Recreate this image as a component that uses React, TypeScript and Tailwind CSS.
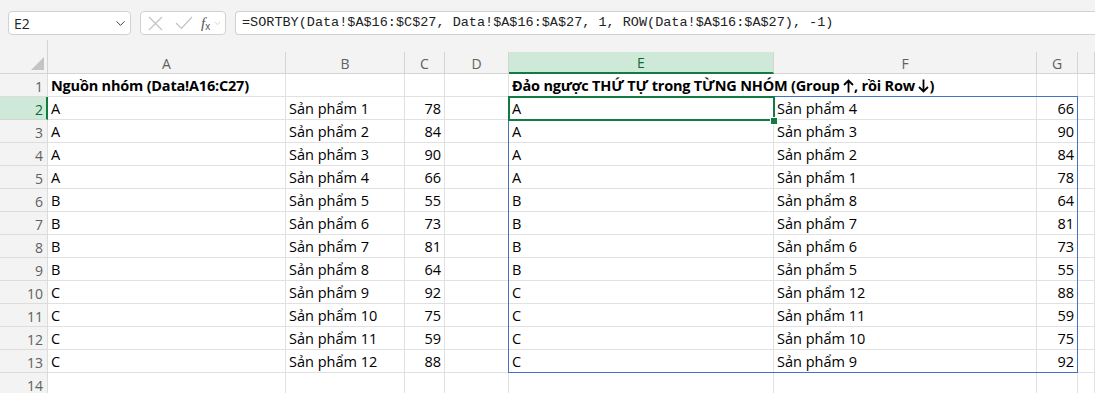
import { ChevronDown } from 'lucide-react';

const left = [
  ['A', 'Sản phẩm 1', 78],
  ['A', 'Sản phẩm 2', 84],
  ['A', 'Sản phẩm 3', 90],
  ['A', 'Sản phẩm 4', 66],
  ['B', 'Sản phẩm 5', 55],
  ['B', 'Sản phẩm 6', 73],
  ['B', 'Sản phẩm 7', 81],
  ['B', 'Sản phẩm 8', 64],
  ['C', 'Sản phẩm 9', 92],
  ['C', 'Sản phẩm 10', 75],
  ['C', 'Sản phẩm 11', 59],
  ['C', 'Sản phẩm 12', 88],
];

const right = [
  ['A', 'Sản phẩm 4', 66],
  ['A', 'Sản phẩm 3', 90],
  ['A', 'Sản phẩm 2', 84],
  ['A', 'Sản phẩm 1', 78],
  ['B', 'Sản phẩm 8', 64],
  ['B', 'Sản phẩm 7', 81],
  ['B', 'Sản phẩm 6', 73],
  ['B', 'Sản phẩm 5', 55],
  ['C', 'Sản phẩm 12', 88],
  ['C', 'Sản phẩm 11', 59],
  ['C', 'Sản phẩm 10', 75],
  ['C', 'Sản phẩm 9', 92],
];

const colLetters = ['A', 'B', 'C', 'D', 'E', 'F', 'G', ''];

function Cell({ children, align = 'left', bold = false, noRight = false }: { children?: React.ReactNode; align?: 'left' | 'right'; bold?: boolean; noRight?: boolean }) {
  return (
    <div
      className={`h-[23px] border-b border-[#e1e1e1] flex items-center pt-[2px] px-[3px] whitespace-nowrap overflow-visible ${noRight ? '' : 'border-r'} ${align === 'right' ? 'justify-end' : ''} ${bold ? 'font-bold tracking-[-0.2px]' : ''}`}
    >
      {children}
    </div>
  );
}

function Arrow({ up }: { up?: boolean }) {
  return (
    <svg width="11" height="14" viewBox="0 0 11 14" className="inline-block -mt-[2px]">
      {up ? (
        <path d="M5.5 13.5V1.5M1 6l4.5-4.5L10 6" fill="none" stroke="#000" strokeWidth="1.8" />
      ) : (
        <path d="M5.5 0.5v12M1 8l4.5 4.5L10 8" fill="none" stroke="#000" strokeWidth="1.8" />
      )}
    </svg>
  );
}

function FormulaBar() {
  return (
    <div className="h-[52px] bg-[#f3f3f3] flex flex-col">
      <div className="h-[40px] flex items-start pt-[11px] pl-[8px] gap-[9px]">
        <div className="w-[123px] h-[24px] bg-white border border-[#d1d1d1] rounded-[4px] flex items-center justify-between pl-[5px] pr-[2px] text-[14px] text-[#242424]">
          <span>E2</span>
          <ChevronDown size={15} strokeWidth={1.6} className="text-[#424242]" />
        </div>
        <div className="w-[86px] h-[24px] bg-white border border-[#d1d1d1] rounded-[4px] flex items-center pl-[7px]">
          <svg width="15" height="15" viewBox="0 0 15 15">
            <path d="M1 1l13 13M14 1L1 14" stroke="#c2c2c2" strokeWidth="1.2" fill="none" />
          </svg>
          <svg width="18" height="14" viewBox="0 0 18 14" className="ml-[12px]">
            <path d="M1 7l5.5 5.5L17 1" stroke="#c2c2c2" strokeWidth="1.2" fill="none" />
          </svg>
          <span className="ml-[8px] font-['Liberation_Serif'] italic text-[15px] text-[#555] leading-none">
            f<sub className="text-[10px] not-italic font-['Liberation_Sans']">x</sub>
          </span>
          <ChevronDown size={9} strokeWidth={1.5} className="text-[#b8b8b8] ml-[3px]" />
        </div>
        <div className="flex-1 h-[24px] bg-white border border-[#d1d1d1] rounded-l-[4px] border-r-0 flex items-center pl-[6px] font-['Liberation_Mono'] text-[13.5px] text-[#222] whitespace-nowrap overflow-hidden">
          =SORTBY(Data!$A$16:$C$27, Data!$A$16:$A$27, 1, ROW(Data!$A$16:$A$27), -1)
        </div>
      </div>
      <div className="h-[12px] flex">
        <div className="w-[48px] border-r border-[#d4d4d4]" />
      </div>
    </div>
  );
}

export default function App() {
  return (
    <div className="w-[1095px] h-[393px] overflow-hidden bg-white font-['Open_Sans',sans-serif] text-[14.5px] text-black">
      <FormulaBar />
      <div className="relative">
        <div className="grid grid-cols-[48px_238px_119px_40px_64px_265px_263px_41px_1fr]">
          {/* column headers */}
          <div className="h-[22px] bg-[#f3f3f3] border-r border-b border-[#d4d4d4] flex items-end justify-end pr-[3px] pb-[3px]">
            <svg width="13" height="13" viewBox="0 0 13 13">
              <polygon points="13,0 13,13 0,13" fill="#c4c4c4" />
            </svg>
          </div>
          {colLetters.map((c, i) =>
            c === 'E' ? (
              <div key={i} className="h-[22px] bg-[#cfe9d9] border-r border-[#d4d4d4] border-b-2 border-b-[#107c41] flex items-center justify-center pt-[1px] text-[#0e6a35] text-[14px]">
                {c}
              </div>
            ) : (
              <div key={i} className="h-[22px] bg-[#f3f3f3] border-r border-b border-[#d4d4d4] flex items-center justify-center pt-[1px] text-[#616161] text-[14px]">
                {c}
              </div>
            )
          )}

          {Array.from({ length: 14 }, (_, idx) => {
            const r = idx + 1;
            const l = r >= 2 && r <= 13 ? left[r - 2] : null;
            const rt = r >= 2 && r <= 13 ? right[r - 2] : null;
            return (
              <div key={r} className="contents">
                {r === 2 ? (
                  <div className="h-[23px] bg-[#cfe9d9] border-b border-[#d4d4d4] border-r-2 border-r-[#107c41] flex items-center justify-end pt-[2px] pr-[3px] text-[#0e6a35] text-[14px]">
                    {r}
                  </div>
                ) : (
                  <div className="h-[23px] bg-[#f3f3f3] border-b border-r border-[#dcdcdc] flex items-center justify-end pt-[2px] pr-[4px] text-[#616161] text-[14px]">
                    {r}
                  </div>
                )}
                {r === 1 ? (
                  <>
                    <Cell bold>Nguồn nhóm (Data!A16:C27)</Cell>
                    <Cell />
                    <Cell />
                    <Cell />
                    <Cell bold noRight>
                      <span>
                        Đảo ngược THỨ TỰ trong TỪNG NHÓM (Group{' '}
                        <Arrow up />, rồi Row{' '}
                        <Arrow />)
                      </span>
                    </Cell>
                    <Cell />
                    <Cell />
                    <Cell />
                  </>
                ) : (
                  <>
                    <Cell>{l?.[0]}</Cell>
                    <Cell>{l?.[1]}</Cell>
                    <Cell align="right">{l?.[2]}</Cell>
                    <Cell />
                    <Cell>{rt?.[0]}</Cell>
                    <Cell>{rt?.[1]}</Cell>
                    <Cell align="right">{rt?.[2]}</Cell>
                    <Cell />
                  </>
                )}
              </div>
            );
          })}
        </div>

        {/* spill range outline */}
        <div className="absolute left-[508px] top-[44px] w-[570px] h-[277px] border border-[#4472c4] pointer-events-none" />
        {/* active cell */}
        <div className="absolute left-[508px] top-[44px] w-[267px] h-[25px] border-2 border-[#107c41] pointer-events-none" />
        <div className="absolute left-[770px] top-[65px] w-[8px] h-[8px] bg-[#107c41] border border-white pointer-events-none" />
      </div>
    </div>
  );
}
